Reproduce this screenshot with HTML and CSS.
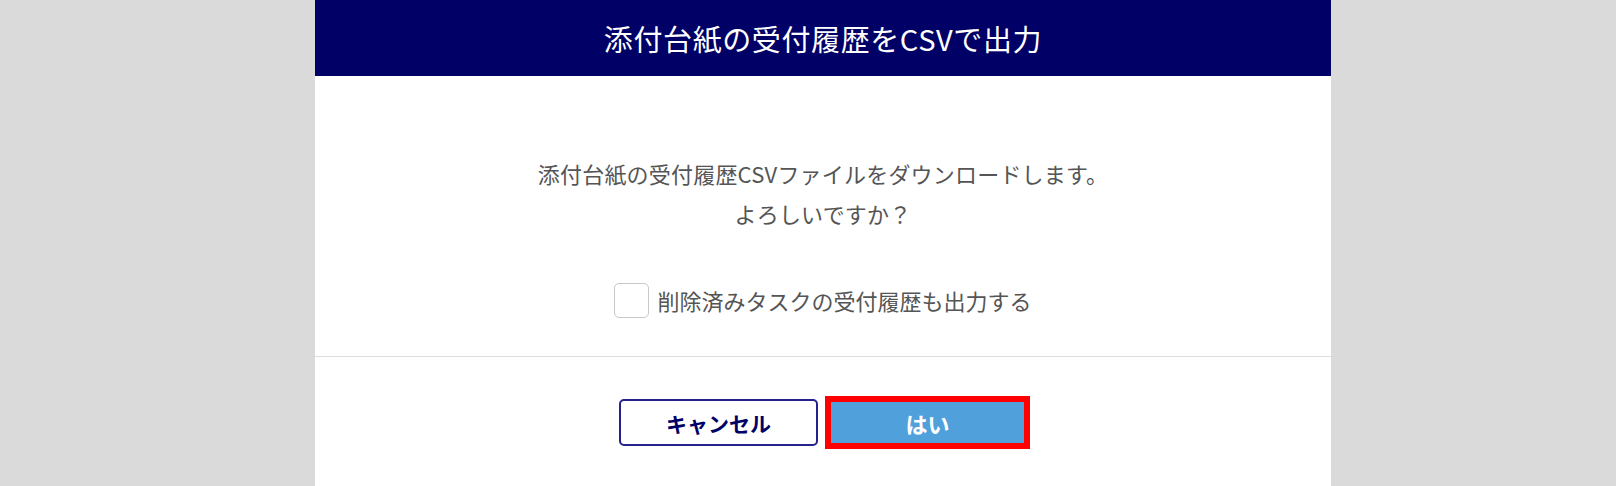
FILE: index.html
```html
<!DOCTYPE html>
<html lang="ja">
<head>
  <meta charset="UTF-8">
  <title>添付台紙の受付履歴をCSVで出力</title>
  <link rel="stylesheet" href="styles.css">
</head>
<body>
<div class="modal">
  <div class="modal-head">添付台紙の受付履歴をCSVで出力</div>
  <div class="modal-body">
    <p class="msg">添付台紙の受付履歴CSVファイルをダウンロードします。<br>よろしいですか？</p>
    <label class="check">
      <input type="checkbox">
      <span class="box"></span>
      <span class="check-text">削除済みタスクの受付履歴も出力する</span>
    </label>
  </div>
  <div class="modal-foot">
    <button class="btn btn-cancel" type="button">キャンセル</button>
    <button class="btn btn-ok" type="button">はい</button>
  </div>
</div>
</body>
</html>
```

FILE: styles.css
```css
*{margin: 0;padding: 0;box-sizing: border-box;}
body{background: #dadada;font-family: "Noto Sans CJK JP", "Noto Sans", sans-serif;color: #555;height: 486px;overflow: hidden;}
.modal{width: 1016px;margin-left: 315px;background: #fff;height: 486px;}
.modal-head{height: 76px;background: #000066;color: #fff;font-size: 29px;letter-spacing: 0.6px;line-height: 76px;text-align: center;}
.modal-body{padding: 77px 0 38px;border-bottom: 1px solid #dedede;text-align: center;}
.msg{font-size: 22px;letter-spacing: 0.2px;line-height: 40px;}
.check{display: flex;width: fit-content;align-items: center;gap: 8px;margin: 50px auto 0;font-size: 22px;line-height: 35px;cursor: pointer;}
.check input{display: none;}
.box{width: 35px;height: 35px;border: 1px solid #c8c8c8;border-radius: 5px;background: #fff;}
.modal-foot{display: flex;justify-content: center;gap: 10px;padding-top: 42px;}
.btn{width: 199px;height: 47px;font-family: inherit;font-size: 21px;font-weight: bold;border-radius: 5px;cursor: pointer;}
.btn-cancel{background: #fff;color: #000066;border: 2px solid #23238a;}
.btn-ok{background: #50a0dc;color: #fff;font-size: 22px;border: none;border-radius: 0;outline: 6px solid #ff0000;outline-offset: -3px;}
```
